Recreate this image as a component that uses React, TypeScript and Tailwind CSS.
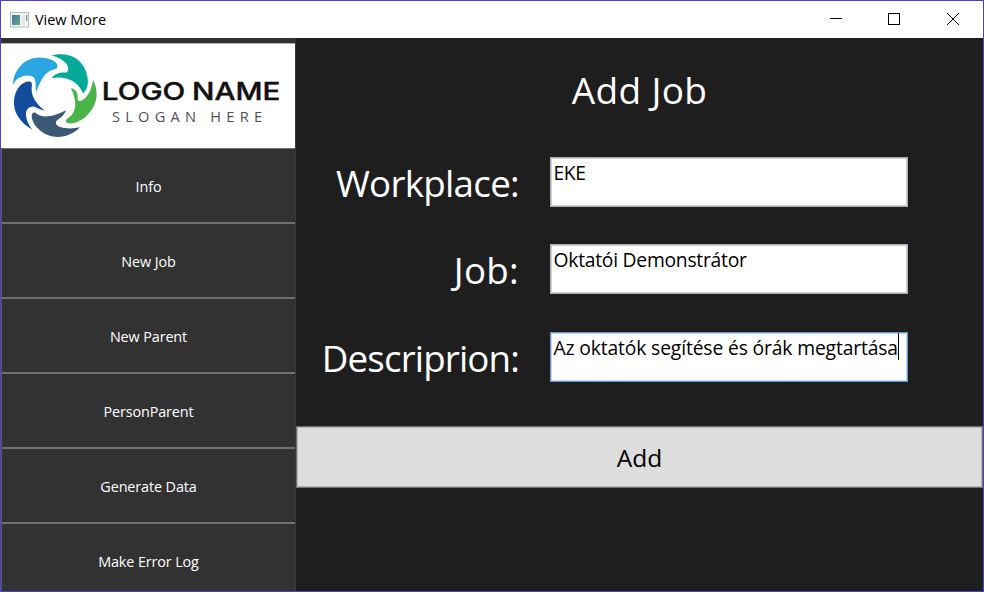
import React from 'react';

const menu = ['Info', 'New Job', 'New Parent', 'PersonParent', 'Generate Data', 'Make Error Log'];

function Logo() {
  return (
    <svg className="block h-[105px] w-[294px] bg-white" viewBox="1 44 294 105">
      <g transform="translate(0 40) scale(0.33333)">
        <path fill="#29a5e0" d="M38 136C40 88 78 49 124 53C148 54 165 61 171 72C174 79 172 86 166 87C138 92 122 117 109 156C105 143 110 122 101 112C91 102 52 102 38 136Z" />
        <path fill="#05a998" d="M154 47C199 34 240 52 256 89C267 116 268 146 248 160C241 131 203 105 155 114C167 100 182 97 196 98C209 97 207 76 194 66C183 56 170 49 154 47Z" />
        <path fill="#49b449" d="M279 119C296 151 294 190 267 220C249 242 219 255 202 249C196 246 196 240 203 235C230 219 233 187 213 145C225 147 234 157 233 173C232 185 239 185 249 179C266 169 276 143 279 119Z" />
        <path fill="#3b5877" d="M240 262C216 287 179 298 145 286C116 275 94 249 95 226C97 217 104 215 110 221C130 237 165 228 198 211C192 226 184 233 172 240C163 248 169 258 181 261C200 267 221 266 240 262Z" />
        <path fill="#124c9d" d="M97 269C59 248 39 215 42 181C45 146 69 121 91 125C97 127 96 134 95 142C93 167 106 191 135 212C121 209 112 203 103 200C92 197 79 206 78 219C77 235 85 254 97 269Z" />
      </g>
      <text x="101.8" y="100.3" fontSize="24.8" fontWeight="500" fill="#111111" stroke="#111111" strokeWidth="0.4" wordSpacing="-1" textLength="178.5" lengthAdjust="spacingAndGlyphs" fontFamily="Inter, sans-serif">LOGO NAME</text>
      <text x="112" y="122.4" fontSize="14.6" fill="#505050" textLength="150" lengthAdjust="spacing" fontFamily="'Open Sans', sans-serif">SLOGAN HERE</text>
    </svg>
  );
}

function TitleBar() {
  return (
    <header className="flex h-[37px] shrink-0 items-center bg-white text-black">
      <svg className="ml-[9px] h-[16px] w-[19px]" viewBox="0 0 19 16">
        <defs>
          <linearGradient id="pane" x1="0" y1="0" x2="1" y2="1">
            <stop offset="0" stopColor="#43749f" />
            <stop offset="1" stopColor="#5fad7c" />
          </linearGradient>
        </defs>
        <rect x="0.5" y="0.5" width="18" height="14.5" fill="#f4f4f4" stroke="#b4b7bb" />
        <rect x="2" y="3" width="8" height="10" fill="url(#pane)" />
        <rect x="11.5" y="3" width="3.5" height="10" fill="#e6e8ea" />
        <rect x="16" y="3" width="1.3" height="6" fill="#62a287" />
      </svg>
      <span className="ml-[6px] grow text-[14.5px] leading-5 tracking-[-0.03px]">View More</span>
      <svg className="h-[37px] w-[174px]" viewBox="809 1 174 37" fill="none" stroke="black" shapeRendering="crispEdges">
        <path d="M830 18.5H842" />
        <rect x="888.5" y="13.5" width="11" height="11" />
        <path d="M947 13L959 25M959 13L947 25" shapeRendering="auto" />
      </svg>
    </header>
  );
}

type FieldProps = { label: string; value: string; labelClass: string; valueClass: string; active?: boolean };

function Field({ label, value, labelClass, valueClass, active }: FieldProps) {
  return (
    <div className="flex h-[50px] items-center">
      <div className={`w-[223px] pt-[2px] whitespace-nowrap text-right text-[36.7px] leading-[50px] ${labelClass}`}>{label}</div>
      <div className={`ml-[31px] h-[50px] w-[358px] border p-px ${active ? 'border-[#569de5] bg-[#cfd2d6]' : 'border-[#abadb3] bg-[#cfd0d3]'}`}>
        <div className={`flex h-full bg-white pl-[1.5px] text-[19.3px] leading-[28px] whitespace-nowrap text-black ${valueClass}`}>
          <span>{value}</span>
          {active && <i className="-mt-px h-[27px] w-px bg-black" />}
        </div>
      </div>
    </div>
  );
}

export default function App() {
  return (
    <div className="flex h-[592px] w-[984px] flex-col overflow-hidden border border-[#4a43c4] font-['Open_Sans',sans-serif]">
      <TitleBar />
      <div className="flex min-h-0 grow">
        <aside className="w-[295px] shrink-0 overflow-hidden border-r border-[#3a3a3a] bg-[#323232] text-white">
          <div className="h-[6px] border-b border-[#b5b5b5] bg-[#303030]" />
          <Logo />
          <nav className="-mt-px">
            {menu.map((item) => (
              <div key={item} className="flex h-[75px] items-center justify-center border border-r-0 border-[#707070] border-l-[#5a5a5a] pt-[2px] text-[14.4px] leading-5 tracking-[-0.12px]">
                {item}
              </div>
            ))}
          </nav>
        </aside>
        <main className="flex grow flex-col bg-[#1e1e1e] text-white">
          <h1 className="mt-[27px] text-center text-[37px] leading-[50px] tracking-[0.35px]">Add Job</h1>
          <div className="mt-[42px] flex flex-col gap-[37.4px]">
            <Field label="Workplace:" value="EKE" labelClass="tracking-[-0.7px]" valueClass="tracking-[-0.4px]" />
            <Field label="Job:" value="Oktatói Demonstrátor" labelClass="tracking-[0.3px]" valueClass="tracking-[-0.25px]" />
            <Field label="Descriprion:" value="Az oktatók segítése és órák megtartása" labelClass="tracking-[-0.85px]" valueClass="tracking-[-0.14px]" active />
          </div>
          <div className="mt-[44.2px] h-[62px] border border-[#707070] bg-[#b4b4b4] p-px">
            <div className="h-full bg-[#dddddd] text-center text-[24.5px] leading-[60px] text-black">Add</div>
          </div>
        </main>
      </div>
    </div>
  );
}
